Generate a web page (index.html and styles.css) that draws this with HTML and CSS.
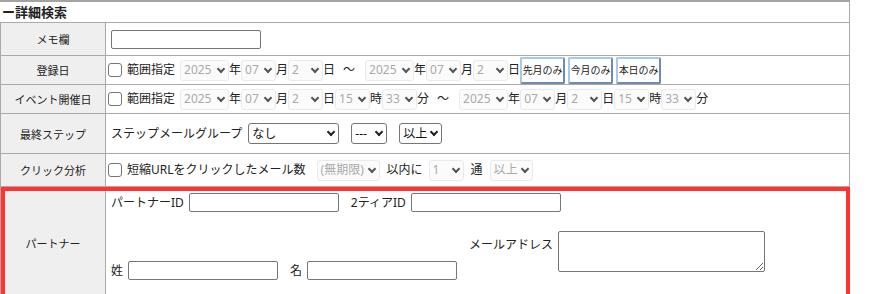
FILE: index.html
```html
<!DOCTYPE html>
<html lang="ja">
<head>
    <meta charset="UTF-8">
    <meta name="viewport" content="width=device-width, initial-scale=1.0">
    <link rel="stylesheet" href="styles.css">
</head>
<body>
<div class="panel">
    <div class="panel-title">ー詳細検索</div>
    <table class="search">
        <tr class="row-memo">
            <th>メモ欄</th>
            <td><input type="text" class="txt"></td>
        </tr>
        <tr class="row-date">
            <th>登録日</th>
            <td>
                <div class="line">
                    <input type="checkbox" class="chk"><span class="chk-label">範囲指定</span>
                    <span class="sel off year"><select disabled><option>2025</option></select></span><span>年</span>
                    <span class="sel off num"><select disabled><option>07</option></select></span><span>月</span>
                    <span class="sel off num"><select disabled><option>2</option></select></span><span>日</span>
                    <span class="tilde">～</span>
                    <span class="sel off year"><select disabled><option>2025</option></select></span><span>年</span>
                    <span class="sel off num"><select disabled><option>07</option></select></span><span>月</span>
                    <span class="sel off num"><select disabled><option>2</option></select></span><span>日</span>
                    <button class="quick">先月のみ</button>
                    <button class="quick">今月のみ</button>
                    <button class="quick">本日のみ</button>
                </div>
            </td>
        </tr>
        <tr class="row-date">
            <th>イベント開催日</th>
            <td>
                <div class="line">
                    <input type="checkbox" class="chk"><span class="chk-label">範囲指定</span>
                    <span class="sel off year"><select disabled><option>2025</option></select></span><span>年</span>
                    <span class="sel off num"><select disabled><option>07</option></select></span><span>月</span>
                    <span class="sel off num"><select disabled><option>2</option></select></span><span>日</span>
                    <span class="sel off num"><select disabled><option>15</option></select></span><span>時</span>
                    <span class="sel off num"><select disabled><option>33</option></select></span><span>分</span>
                    <span class="tilde">～</span>
                    <span class="sel off year"><select disabled><option>2025</option></select></span><span>年</span>
                    <span class="sel off num"><select disabled><option>07</option></select></span><span>月</span>
                    <span class="sel off num"><select disabled><option>2</option></select></span><span>日</span>
                    <span class="sel off num"><select disabled><option>15</option></select></span><span>時</span>
                    <span class="sel off num"><select disabled><option>33</option></select></span><span>分</span>
                </div>
            </td>
        </tr>
        <tr class="row-step">
            <th>最終ステップ</th>
            <td>
                <div class="line">
                    <span class="step-label">ステップメールグループ</span>
                    <span class="sel group"><select><option>なし</option></select></span>
                    <span class="sel dash"><select><option>---</option></select></span>
                    <span class="sel cmp"><select><option>以上</option></select></span>
                </div>
            </td>
        </tr>
        <tr class="row-click">
            <th>クリック分析</th>
            <td>
                <div class="line">
                    <input type="checkbox" class="chk"><span class="click-label">短縮URLをクリックしたメール数</span>
                    <span class="sel off period"><select disabled><option>(無期限)</option></select></span>
                    <span class="within">以内に</span>
                    <span class="sel off num"><select disabled><option>1</option></select></span>
                    <span class="unit">通</span>
                    <span class="sel off cmp"><select disabled><option>以上</option></select></span>
                </div>
            </td>
        </tr>
        <tr class="row-partner">
            <th>パートナー</th>
            <td>
                <div class="line">
                    <span class="field-label">パートナーID</span><input type="text" class="txt">
                    <span class="field-label next">2ティアID</span><input type="text" class="txt">
                </div>
                <div class="partner-bottom">
                    <div class="line name-fields">
                        <span class="field-label">姓</span><input type="text" class="txt">
                        <span class="field-label next">名</span><input type="text" class="txt">
                    </div>
                    <div class="mail-field">
                        <span class="field-label mail-label">メールアドレス</span>
                        <textarea class="mail"></textarea>
                    </div>
                </div>
            </td>
        </tr>
    </table>
</div>
</body>
</html>
```

FILE: styles.css
```css
body {
    margin: 0;
    font-family: "Noto Sans", "Noto Sans CJK JP", sans-serif;
    font-size: 12px;
    color: #222;
    background: #fff;
}

.panel {
    width: 850px;
    border-top: 2px solid #a3a3a3;
}

.panel-title {
    box-sizing: border-box;
    height: 20px;
    line-height: 20px;
    padding-left: 2px;
    font-size: 13px;
    font-weight: bold;
    border-right: 1px solid #aaa;
}

.search {
    width: 850px;
    border-collapse: collapse;
}

.search th,
.search td {
    border: 1px solid #aaa;
    padding: 0;
}

.search th {
    width: 104px;
    background-color: #efefef;
    font-weight: normal;
    font-size: 11px;
    text-align: center;
    vertical-align: middle;
}

.search td {
    padding-left: 5px;
    vertical-align: middle;
}

.row-memo td { height: 32px; }
.row-date td { height: 28px; }
.row-step td { height: 39px; }
.row-click td { height: 32px; }
.row-partner td { height: 106px; }

.row-partner {
    outline: 4px solid #ff3333;
    outline-offset: -4px;
}

.row-partner td {
    vertical-align: top;
    padding-top: 6px;
}

.line {
    display: flex;
    align-items: center;
    white-space: nowrap;
    line-height: 16px;
}

.txt {
    box-sizing: border-box;
    width: 150px;
    height: 19px;
    margin: 0;
    border: 1px solid #767676;
    border-radius: 2px;
    font: inherit;
}

.chk {
    appearance: none;
    box-sizing: border-box;
    width: 14px;
    height: 14px;
    margin: 0 5px 0 -3px;
    border: 1px solid #767676;
    border-radius: 3px;
    background: #fff;
}

.chk-label { margin-right: 5px; }

.sel {
    position: relative;
    display: inline-block;
    height: 21px;
}

.sel select {
    appearance: none;
    box-sizing: border-box;
    width: 100%;
    height: 21px;
    margin: 0;
    padding: 0 0 0 3px;
    border: 1px solid #767676;
    border-radius: 3px;
    background: #fff;
    color: #111;
    font: inherit;
    font-size: 12px;
}

.sel::after {
    content: "";
    position: absolute;
    right: 5px;
    top: 6px;
    box-sizing: border-box;
    width: 6px;
    height: 6px;
    border-right: 2px solid #222;
    border-bottom: 2px solid #222;
    transform: rotate(45deg);
    pointer-events: none;
}

.sel.off select {
    background: #fafafa;
    border-color: #e2e2e2;
    color: #858585;
}

.sel.off::after { border-color: #555; }

.year { width: 49px; }
.num { width: 35px; }
.group { width: 91px; }
.dash { width: 36px; }
.cmp { width: 43px; }
.period { width: 63px; }

.tilde { margin: 0 10px 0 8px; }

.quick {
    box-sizing: border-box;
    width: 45px;
    height: 27px;
    margin: 0 3px 0 0;
    padding: 0;
    border: 2px solid;
    border-color: #a8c9ec #6f8cae #6f8cae #a8c9ec;
    border-radius: 2px;
    background: #fff;
    color: #222;
    font: inherit;
    font-size: 10px;
}

.step-label { margin-right: 6px; }
.group, .dash { margin-right: 12px; }

.click-label { margin-right: 11px; }
.within { margin: 0 6px 0 7px; }
.unit { margin: 0 7px; }

.field-label { margin-right: 5px; }
.field-label.next { margin-left: 12px; }

.partner-bottom {
    display: flex;
    align-items: flex-start;
    margin-top: 19px;
}

.name-fields { margin-top: 30px; }

.mail-field {
    display: flex;
    align-items: flex-start;
    margin-left: 12px;
}

.mail-label { margin-top: 4px; }

.mail {
    box-sizing: border-box;
    width: 207px;
    height: 41px;
    margin: 0;
    border: 1px solid #767676;
    border-radius: 2px;
    font: inherit;
}
```
